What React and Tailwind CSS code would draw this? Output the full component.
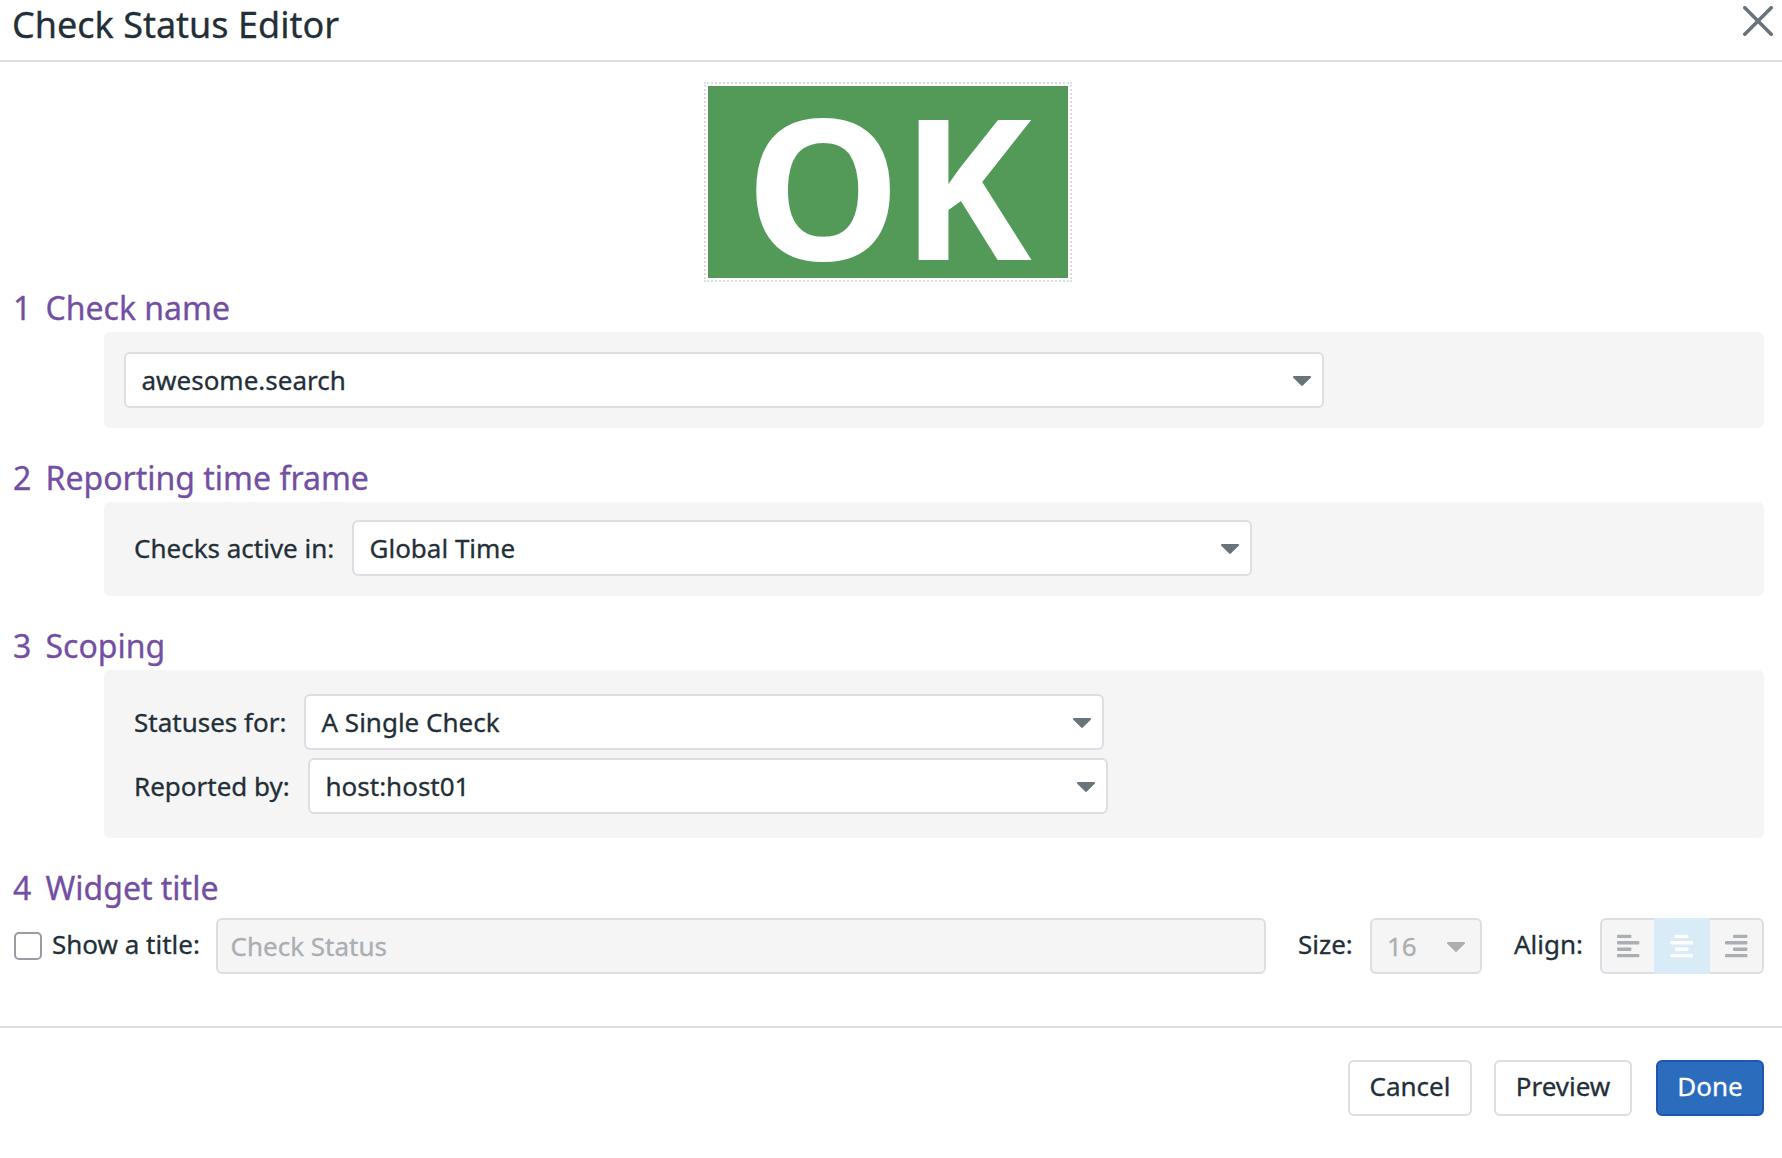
import React from "react";

function Caret({ className = "mt-[2px] text-[#69737a]" }) {
  return (
    <svg className={`h-[10px] w-[18px] shrink-0 ${className}`} viewBox="0 0 18 10">
      <path d="M1 0h16c.9 0 1.3 1 .7 1.7L9.8 9.6a1.1 1.1 0 0 1-1.6 0L.3 1.7C-.3 1 .1 0 1 0z" fill="currentColor" />
    </svg>
  );
}

function Select({ value, width }) {
  return (
    <div
      className={`flex h-14 items-center justify-between rounded-md border-2 border-[#dddde3] bg-white pr-[11px] pl-[15.5px] ${width}`}
    >
      <span>{value}</span>
      <Caret />
    </div>
  );
}

function Heading({ number, children }) {
  return (
    <h2 className="flex h-12 items-center pl-[13px] text-[32px] leading-[48px] text-[#734fa3]">
      <span className="w-[32.5px]">{number}</span>
      <span>{children}</span>
    </h2>
  );
}

function AlignBars({ rows, className }) {
  return (
    <svg className={`h-6 w-[23px] ${className}`} viewBox="0 0 23 24">
      {rows.map(([x, w], i) => (
        <rect key={i} x={x} y={0.7 + i * 6.4} width={w} height="3.4" rx="0.8" fill="currentColor" />
      ))}
    </svg>
  );
}

export default function App() {
  return (
    <div className="h-[1158px] w-[1782px] overflow-hidden bg-white font-['Noto_Sans',sans-serif] text-[26px] leading-9 text-[#232f38] [-webkit-text-stroke:0.3px_currentColor]">
      <header className="flex h-[62px] items-start justify-between border-b-2 border-[#dddde3] pr-[9px] pl-3">
        <h1 className="pt-px text-[36px] leading-[48px]">Check Status Editor</h1>
        <button className="mt-[6px]" aria-label="Close">
          <svg className="h-[30px] w-[30px]" viewBox="0 0 30 30">
            <path d="M1.8 1.8l26.4 26.4M28.2 1.8L1.8 28.2" stroke="#69737a" strokeWidth="3.6" strokeLinecap="round" />
          </svg>
        </button>
      </header>

      <div className="mt-5 mb-[2px] ml-[704px] h-[200px] w-[368px] border-2 border-dotted border-[#dddde3] p-[2px]">
        <div className="flex h-full items-center justify-center bg-[#539a58] pt-1 pl-px text-[196.5px] leading-[192px] font-bold text-white [-webkit-text-stroke:0px]">
          OK
        </div>
      </div>

      <section className="mb-[26px]">
        <Heading number="1">Check name</Heading>
        <div className="mr-[18px] ml-[104px] flex h-24 items-center rounded-md bg-[#f5f5f5] pl-5">
          <Select value="awesome.search" width="w-[1200px]" />
        </div>
      </section>

      <section className="mb-[26px]">
        <Heading number="2">Reporting time frame</Heading>
        <div className="mr-[18px] ml-[104px] flex h-[94px] items-center rounded-md bg-[#f5f5f5] pb-[2px] pl-[30px]">
          <span className="w-[218px]">Checks active in:</span>
          <Select value="Global Time" width="w-[900px]" />
        </div>
      </section>

      <section className="mb-[26px]">
        <Heading number="3">Scoping</Heading>
        <div className="mr-[18px] ml-[104px] flex h-[168px] flex-col justify-center gap-2 rounded-md bg-[#f5f5f5] pl-[30px]">
          <div className="flex items-center">
            <span className="w-[170px]">Statuses for:</span>
            <Select value="A Single Check" width="w-[800px]" />
          </div>
          <div className="flex items-center">
            <span className="w-[174px]">Reported by:</span>
            <Select value="host:host01" width="w-[800px]" />
          </div>
        </div>
      </section>

      <section>
        <Heading number="4">Widget title</Heading>
        <div className="mt-[6px] flex h-14 items-center pr-[18px] pl-[14px]">
          <span className="h-7 w-7 rounded-[5px] border-2 border-[#979da2] bg-white" />
          <span className="w-[174px] pb-1 pl-[10px]">Show a title:</span>
          <div className="flex h-14 w-[1050px] items-center rounded-md border-2 border-[#dddde3] bg-[#f5f5f5] pl-[12.5px] text-[#abaeb3]">
            Check Status
          </div>
          <span className="w-[104px] pb-1 pl-8">Size:</span>
          <div className="flex h-14 w-28 items-center justify-between rounded-md border-2 border-[#dddde3] bg-[#f5f5f5] pr-[15px] pl-[15px] text-[#abaeb3]">
            16
            <Caret className="mt-[2px] text-[#abaeb3]" />
          </div>
          <span className="w-[118px] pb-1 pl-8">Align:</span>
          <div className="flex h-14 w-[164px]">
            <div className="flex w-[54px] items-center rounded-l-md border-2 border-r-0 border-[#dddde3] bg-[#f5f5f5] pl-[15px]">
              <AlignBars className="text-[#abaeb3]" rows={[[0, 14.4], [0, 22.4], [0, 14.4], [0, 22.4]]} />
            </div>
            <div className="flex w-14 items-center bg-[#d9ebf7] pl-4">
              <AlignBars className="text-white" rows={[[5, 13.4], [0.4, 22.6], [5, 13.4], [0.4, 22.6]]} />
            </div>
            <div className="flex w-[54px] items-center justify-end rounded-r-md border-2 border-l-0 border-[#dddde3] bg-[#f5f5f5] pr-[14px]">
              <AlignBars className="text-[#abaeb3]" rows={[[8, 14.4], [0, 22.4], [8, 14.4], [0, 22.4]]} />
            </div>
          </div>
        </div>
      </section>

      <footer className="mt-[52px] flex justify-end border-t-2 border-[#dddde3] pt-8 pr-[18px]">
        <button className="mr-[22px] h-14 w-[124px] rounded-md border-2 border-[#dddde3] bg-white pb-1">Cancel</button>
        <button className="mr-6 h-14 w-[138px] rounded-md border-2 border-[#dddde3] bg-white pb-1">Preview</button>
        <button className="h-14 w-[108px] rounded-md border-2 border-[#1f55b5] bg-[#2b6cbd] pb-1 text-white">Done</button>
      </footer>
    </div>
  );
}
